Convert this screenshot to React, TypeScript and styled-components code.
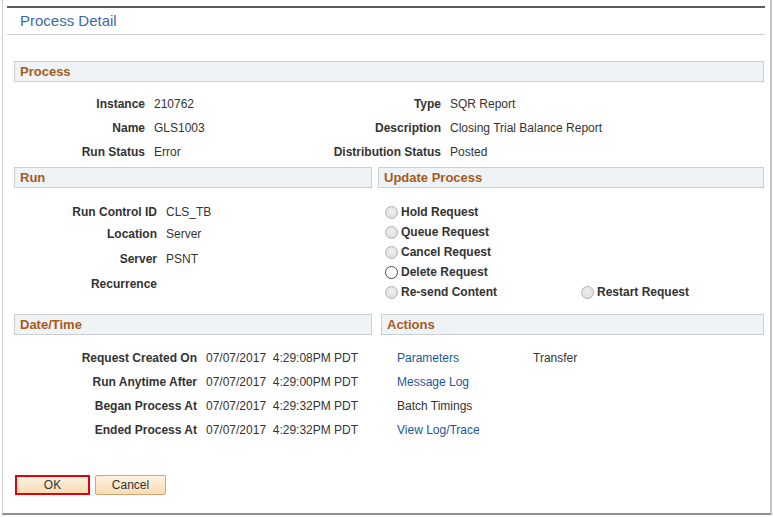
import React from "react";
import styled, { createGlobalStyle } from "styled-components";

const Global = createGlobalStyle`
  html, body { margin: 0; padding: 0; background: #ffffff; }
  body { font-family: "Liberation Sans", Arial, sans-serif; font-size: 12px; color: #333; }
`;

const Frame = styled.div`
  margin-left: 2px;
  width: 770px;
  height: 515px;
  border-left: 1px solid #cfcfcf;
  border-right: 2px solid #c4c4c4;
  border-bottom: 2px solid #8f8f8f;
  padding: 6px 5px 0 4px;
  box-sizing: border-box;
  background: #fff;
`;

const TitleBar = styled.div`
  border-top: 2px solid #5b5b5b;
  border-bottom: 1px solid #cccccc;
  height: 29px;
  box-sizing: border-box;
  display: flex;
  align-items: center;
  padding-left: 13px;
  padding-bottom: 2px;
`;

const Title = styled.h1`
  margin: 0;
  font-family: "Liberation Sans", Arial, sans-serif;
  font-weight: normal;
  font-size: 15px;
  color: #3d6aa6;
`;

const Content = styled.div`
  padding: 26px 1px 0 7px;
  display: flex;
  flex-direction: column;
`;

const SectionHeader = styled.div`
  height: 21px;
  box-sizing: border-box;
  border: 1px solid #c9d0d5;
  background: #f0f3f5;
  color: #a65a1e;
  font-weight: bold;
  font-size: 13px;
  display: flex;
  align-items: center;
  padding-left: 5px;
`;

const ProcessGrid = styled.div`
  display: grid;
  grid-template-columns: 131px 140px 138px 1fr;
  grid-template-rows: 24px 24px 23px;
  column-gap: 9px;
  padding-top: 10px;
  align-items: center;
`;

const Label = styled.div`
  font-weight: bold;
  color: #333;
  text-align: right;
  white-space: nowrap;
`;

const Value = styled.div`
  color: #333;
  white-space: pre;
`;

const TwoCol = styled.div<{ $cols: string; $gap: number; $mt: number }>`
  display: grid;
  grid-template-columns: ${(p) => p.$cols};
  column-gap: ${(p) => p.$gap}px;
  margin-top: ${(p) => p.$mt}px;
`;

const Column = styled.div`
  display: flex;
  flex-direction: column;
`;

const FieldList = styled.div<{ $pt: number }>`
  display: flex;
  flex-direction: column;
  padding-top: ${(p) => p.$pt}px;
`;

const FieldRow = styled.div<{ $label: number; $h: number }>`
  display: grid;
  grid-template-columns: ${(p) => p.$label}px 1fr;
  column-gap: 9px;
  height: ${(p) => p.$h}px;
  align-items: center;
`;

const RadioList = styled.div`
  display: flex;
  flex-direction: column;
  padding: 14px 0 0 7px;
`;

const RadioRow = styled.div`
  display: flex;
  height: 20px;
  align-items: center;
`;

const RadioItem = styled.div<{ $w?: number }>`
  display: flex;
  align-items: center;
  gap: 3px;
  width: ${(p) => (p.$w ? `${p.$w}px` : "auto")};
  font-weight: bold;
  color: #333;
`;

const Circle = styled.span<{ $enabled?: boolean }>`
  width: 13px;
  height: 13px;
  box-sizing: border-box;
  border-radius: 50%;
  border: 1px solid ${(p) => (p.$enabled ? "#4a4a4a" : "#b4b4b4")};
  background: ${(p) =>
    p.$enabled
      ? "#ffffff"
      : "radial-gradient(circle at 50% 40%, #f0f0f0 0%, #e2e2e2 60%, #d6d6d6 100%)"};
  flex: none;
`;

const ActionsGrid = styled.div`
  display: grid;
  grid-template-columns: 136px 1fr;
  grid-auto-rows: 24px;
  align-items: center;
  padding: 11px 0 0 16px;
`;

const Link = styled.a`
  color: #1a5799;
  text-decoration: none;
  cursor: pointer;
`;

const PlainAction = styled.span`
  color: #333;
`;

const ButtonBar = styled.div`
  display: flex;
  gap: 5px;
  margin-top: 33px;
  padding-left: 1px;
`;

const Button = styled.button<{ $focus?: boolean; $w: number }>`
  width: ${(p) => p.$w}px;
  height: 20px;
  box-sizing: border-box;
  font-family: "Liberation Sans", Arial, sans-serif;
  font-size: 12px;
  color: #333;
  background: linear-gradient(#fdf2e2, #f8dcb2);
  border: ${(p) => (p.$focus ? "2px solid #e4000f" : "1px solid #d3a571")};
  border-radius: ${(p) => (p.$focus ? "0" : "2px")};
  padding: 0;
  cursor: pointer;
`;

const runFields: [string, string, number][] = [
  ["Run Control ID", "CLS_TB", 22],
  ["Location", "Server", 22],
  ["Server", "PSNT", 28],
  ["Recurrence", "", 22],
];

const dateFields: [string, string][] = [
  ["Request Created On", "07/07/2017  4:29:08PM PDT"],
  ["Run Anytime After", "07/07/2017  4:29:00PM PDT"],
  ["Began Process At", "07/07/2017  4:29:32PM PDT"],
  ["Ended Process At", "07/07/2017  4:29:32PM PDT"],
];

export default function App() {
  return (
    <>
      <Global />
      <Frame>
        <TitleBar>
          <Title>Process Detail</Title>
        </TitleBar>
        <Content>
          <SectionHeader>Process</SectionHeader>
          <ProcessGrid>
            <Label>Instance</Label>
            <Value>210762</Value>
            <Label>Type</Label>
            <Value>SQR Report</Value>
            <Label>Name</Label>
            <Value>GLS1003</Value>
            <Label>Description</Label>
            <Value>Closing Trial Balance Report</Value>
            <Label>Run Status</Label>
            <Value>Error</Value>
            <Label>Distribution Status</Label>
            <Value>Posted</Value>
          </ProcessGrid>

          <TwoCol $cols="358px 1fr" $gap={6} $mt={4}>
            <Column>
              <SectionHeader>Run</SectionHeader>
              <FieldList $pt={13}>
                {runFields.map(([l, v, h]) => (
                  <FieldRow key={l} $label={143} $h={h}>
                    <Label>{l}</Label>
                    <Value>{v}</Value>
                  </FieldRow>
                ))}
              </FieldList>
            </Column>
            <Column>
              <SectionHeader>Update Process</SectionHeader>
              <RadioList>
                <RadioRow>
                  <RadioItem>
                    <Circle />
                    Hold Request
                  </RadioItem>
                </RadioRow>
                <RadioRow>
                  <RadioItem>
                    <Circle />
                    Queue Request
                  </RadioItem>
                </RadioRow>
                <RadioRow>
                  <RadioItem>
                    <Circle />
                    Cancel Request
                  </RadioItem>
                </RadioRow>
                <RadioRow>
                  <RadioItem>
                    <Circle $enabled />
                    Delete Request
                  </RadioItem>
                </RadioRow>
                <RadioRow>
                  <RadioItem $w={196}>
                    <Circle />
                    Re-send Content
                  </RadioItem>
                  <RadioItem>
                    <Circle />
                    Restart Request
                  </RadioItem>
                </RadioRow>
              </RadioList>
            </Column>
          </TwoCol>

          <TwoCol $cols="358px 1fr" $gap={9} $mt={12}>
            <Column>
              <SectionHeader>Date/Time</SectionHeader>
              <FieldList $pt={11}>
                {dateFields.map(([l, v]) => (
                  <FieldRow key={l} $label={183} $h={24}>
                    <Label>{l}</Label>
                    <Value>{v}</Value>
                  </FieldRow>
                ))}
              </FieldList>
            </Column>
            <Column>
              <SectionHeader>Actions</SectionHeader>
              <ActionsGrid>
                <Link>Parameters</Link>
                <PlainAction>Transfer</PlainAction>
                <Link>Message Log</Link>
                <span />
                <PlainAction>Batch Timings</PlainAction>
                <span />
                <Link>View Log/Trace</Link>
                <span />
              </ActionsGrid>
            </Column>
          </TwoCol>

          <ButtonBar>
            <Button $focus $w={75}>OK</Button>
            <Button $w={71}>Cancel</Button>
          </ButtonBar>
        </Content>
      </Frame>
    </>
  );
}
